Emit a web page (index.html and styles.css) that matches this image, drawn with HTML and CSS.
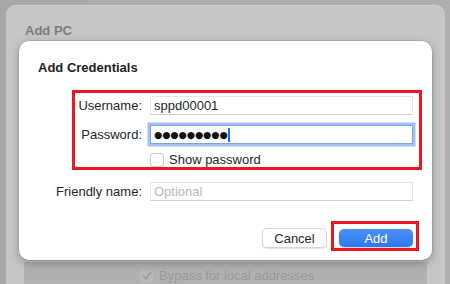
FILE: index.html
```html
<!DOCTYPE html>
<html>
<head>
<meta charset="utf-8">
<link rel="stylesheet" href="styles.css">
</head>
<body>
  <div class="topstrip"></div>
  <div class="sheet">
    <div class="sheet-title">Add PC</div>
    <div class="sheet-body">
      <div class="bypass">
        <span class="bypass-box">
          <svg width="10" height="10" viewBox="0 0 10 10"><path d="M1.5 5.2 L4 7.8 L8.6 1.8" fill="none" stroke="#9c9c9c" stroke-width="1.6" stroke-linecap="round" stroke-linejoin="round"/></svg>
        </span>
        <span>Bypass for local addresses</span>
      </div>
    </div>
  </div>

  <div class="dialog">
    <div class="dialog-title">Add Credentials</div>
    <div class="form">
      <div class="label row-user">Username:</div>
      <div class="field row-user"><span class="value">sppd00001</span></div>

      <div class="label row-pass">Password:</div>
      <div class="field focused row-pass"><span class="dots">●●●●●●●●●</span><span class="caret"></span></div>

      <div class="check-row row-check">
        <span class="checkbox"></span>
        <span class="check-label">Show password</span>
      </div>

      <div class="label row-friendly">Friendly name:</div>
      <div class="field row-friendly"><span class="placeholder">Optional</span></div>
    </div>
    <div class="footer">
      <button class="btn btn-cancel">Cancel</button>
      <button class="btn btn-add">Add</button>
    </div>
  </div>

  <div class="highlight highlight-form"></div>
  <div class="highlight highlight-add"></div>
</body>
</html>
```

FILE: styles.css
```css
html, body {
  margin: 0;
  padding: 0;
  width: 450px;
  height: 284px;
  overflow: hidden;
}
body {
  position: relative;
  background: linear-gradient(to right, #a8a8a8 0, #a8a8a8 88px, #afafaf 88px, #afafaf 100%);
  font-family: "Liberation Sans", Arial, sans-serif;
  font-size: 13px;
  color: #222;
}
.topstrip {
  height: 5px;
}
.sheet {
  margin: 0 5px 0 6px;
  height: 279px;
  box-sizing: border-box;
  background: #c6c6c6;
  border-radius: 10px 10px 0 0;
  box-shadow: inset 0 1px 0 #d0d0d0;
  padding-top: 18px;
}
.sheet-title {
  padding-left: 19px;
  font-weight: bold;
  line-height: 16px;
  color: #7b7b7b;
}
.sheet-body {
  margin: 222px 18px 0 18px;
  height: 22px;
  background: #b1b1b1;
  border-top: 1px solid #c9c9c9;
  padding: 6px 0 0 116px;
}
.bypass {
  display: flex;
  align-items: center;
  gap: 6px;
  line-height: 16px;
  color: #989898;
}
.bypass-box {
  width: 13px;
  height: 13px;
  border-radius: 3px;
  background: #b8b8b8;
  display: flex;
  align-items: center;
  justify-content: center;
}
.dialog {
  position: absolute;
  left: 19px;
  top: 41px;
  width: 413px;
  height: 219px;
  box-sizing: border-box;
  background: #fff;
  border-radius: 10px;
  box-shadow: 0 3px 10px rgba(0, 0, 0, 0.28), 0 0 0 0.5px rgba(0, 0, 0, 0.15);
  padding: 19px 19px 0 19px;
}
.dialog-title {
  font-weight: bold;
  line-height: 16px;
  color: #1e1e1e;
}
.form {
  margin-top: 20px;
  display: grid;
  grid-template-columns: 104px 263px;
  column-gap: 8px;
  align-items: center;
}
.label {
  text-align: right;
  color: #262626;
  line-height: 16px;
}
.row-pass { margin-top: 10px; }
.row-check { margin-top: 8px; }
.row-friendly { margin-top: 14px; }
.field {
  height: 19px;
  box-sizing: border-box;
  border: 1px solid #e4e4e4;
  border-bottom-color: #d2d2d2;
  background: #fff;
  padding: 0 3px;
  display: flex;
  align-items: center;
  line-height: 16px;
  color: #1f1f1f;
}
.field.focused {
  border-color: #7aa5ef;
  box-shadow: 0 0 0 2.5px #a3c0f3;
  height: 19px;
}
.dots {
  font-family: "DejaVu Sans", sans-serif;
  font-size: 9.4px;
  letter-spacing: 0;
  color: #111;
  padding-top: 1px;
}
.caret {
  width: 2px;
  height: 14px;
  background: #2b6ef0;
  margin-left: 0px;
}
.placeholder {
  color: #b9b9b9;
}
.check-row {
  grid-column: 2;
  display: flex;
  align-items: center;
  gap: 5px;
  line-height: 16px;
}
.checkbox {
  width: 12px;
  height: 12px;
  border: 1px solid #cbcbcb;
  border-radius: 3px;
  background: #fff;
  box-shadow: 0 0.5px 0 rgba(0,0,0,0.06);
}
.check-label {
  color: #262626;
}
.footer {
  margin-top: 27px;
  display: flex;
  justify-content: flex-end;
  align-items: center;
  gap: 12px;
}
.btn {
  font-family: "Liberation Sans", Arial, sans-serif;
  font-size: 13px;
  border-radius: 5px;
  padding: 0;
  cursor: default;
}
.btn-cancel {
  width: 65px;
  height: 20px;
  background: #fff;
  border: 1px solid #d6d6d6;
  box-shadow: 0 1px 1px rgba(0, 0, 0, 0.12);
  color: #1f1f1f;
}
.btn-add {
  width: 74px;
  height: 18px;
  border: none;
  background: linear-gradient(#4c90f7, #2f78ee);
  box-shadow: 0 0.5px 1.5px rgba(0, 0, 0, 0.2);
  color: #fff;
}
.highlight {
  position: absolute;
  box-sizing: border-box;
  border: 3px solid #e51a24;
}
.highlight-form {
  left: 72px;
  top: 90px;
  width: 350px;
  height: 80px;
}
.highlight-add {
  left: 331px;
  top: 221px;
  width: 88px;
  height: 30px;
}
```
